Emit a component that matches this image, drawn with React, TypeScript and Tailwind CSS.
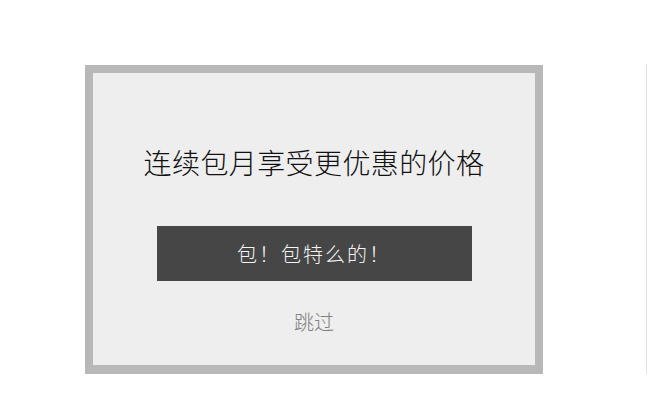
export default function App() {
  return (
    <div className="flex h-[407px] w-[647px] bg-white pt-[64px] pl-[85px] font-['Noto_Sans_CJK_SC','Noto_Sans',sans-serif]">
      {/* Subscription prompt card */}
      <div className="mt-px flex h-[309px] w-[458px] flex-col items-center border-[8px] border-b-[9px] border-[#b8b8b8] bg-[#eeeeee]">
        <h1 className="mt-[75px] text-[28px] leading-[28px] font-light tracking-[0.4px] text-[#111111]">
          连续包月享受更优惠的价格
        </h1>
        <button className="mt-[50px] h-[55px] w-[315px] bg-[#464646] text-[20px] leading-[20px] font-light tracking-[2px] text-[#f4f4f4]">
          包！包特么的！
        </button>
        <button className="mt-[31px] text-[20px] leading-[20px] font-light text-[#808080]">跳过</button>
      </div>
      <div className="ml-auto h-[310px] w-px bg-[#e2e2e2]" />
    </div>
  );
}
